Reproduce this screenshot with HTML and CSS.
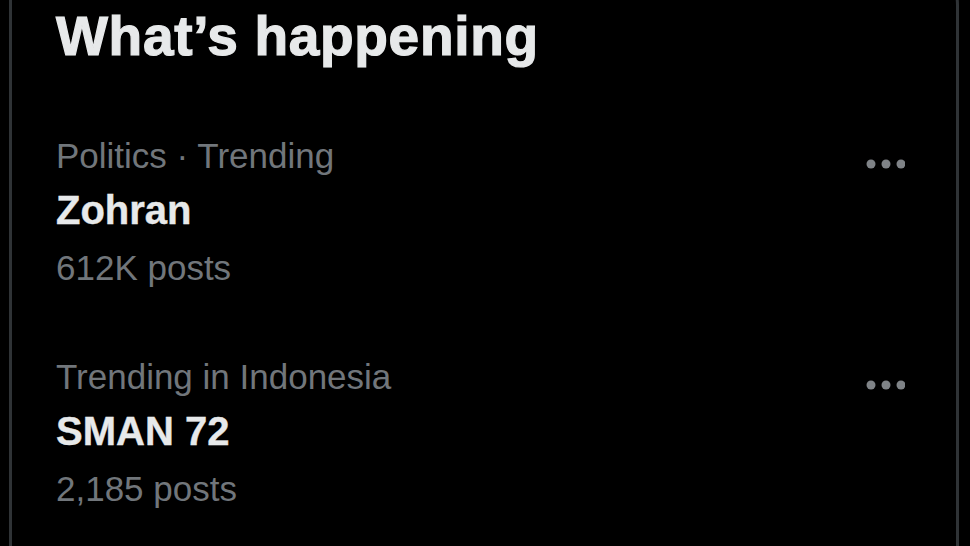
FILE: index.html
```html
<!DOCTYPE html>
<html lang="en">
<head>
<meta charset="utf-8">
<title>What's happening</title>
<link rel="stylesheet" href="styles.css">
</head>
<body>
<section class="card">
  <h2 class="title">What’s happening</h2>
  <div class="trend">
    <div class="trend-text">
      <div class="meta">Politics · Trending</div>
      <div class="name">Zohran</div>
      <div class="meta">612K posts</div>
    </div>
    <button class="more" aria-label="More">
      <svg width="40" height="12" viewBox="0 0 40 12"><circle cx="6" cy="6" r="4.5"/><circle cx="21" cy="6" r="4.5"/><circle cx="36" cy="6" r="4.5"/></svg>
    </button>
  </div>
  <div class="trend">
    <div class="trend-text">
      <div class="meta">Trending in Indonesia</div>
      <div class="name">SMAN 72</div>
      <div class="meta">2,185 posts</div>
    </div>
    <button class="more" aria-label="More">
      <svg width="40" height="12" viewBox="0 0 40 12"><circle cx="6" cy="6" r="4.5"/><circle cx="21" cy="6" r="4.5"/><circle cx="36" cy="6" r="4.5"/></svg>
    </button>
  </div>
</section>
</body>
</html>
```

FILE: styles.css
```css
html, body {
  margin: 0;
  padding: 0;
  background: #000;
  height: 546px;
  overflow: hidden;
}
body {
  font-family: "Liberation Sans", Arial, sans-serif;
  color: #e7e9ea;
}
.card {
  margin: -40px 0 0 9px;
  width: 950px;
  height: 620px;
  border: 3px solid #2f3336;
  border-top-right-radius: 45px;
  border-top-left-radius: 6px;
  padding-top: 40px;
  box-sizing: border-box;
  overflow: hidden;
}
.title {
  margin: 0;
  padding: 1px 0 0 44px;
  height: 99px;
  box-sizing: border-box;
  font-size: 55px;
  line-height: 64px;
  font-weight: 700;
  letter-spacing: 0.7px;
  -webkit-text-stroke: 1.2px #e7e9ea;
  color: #e7e9ea;
}
.trend {
  display: flex;
  justify-content: space-between;
  align-items: flex-start;
  padding: 26px 51px 27px 44px;
}
.trend-text {
  display: flex;
  flex-direction: column;
}
.meta {
  font-size: 35px;
  line-height: 56px;
  color: #71767b;
}
.name {
  font-size: 40px;
  line-height: 56px;
  font-weight: 700;
  color: #e7e9ea;
  -webkit-text-stroke: 0.4px #e7e9ea;
  margin-top: -2px;
  margin-bottom: 2px;
}
.more {
  background: none;
  border: 0;
  padding: 0;
  margin-top: 30px;
  display: flex;
  fill: #7f8387;
}
.more svg {
  display: block;
}
```
